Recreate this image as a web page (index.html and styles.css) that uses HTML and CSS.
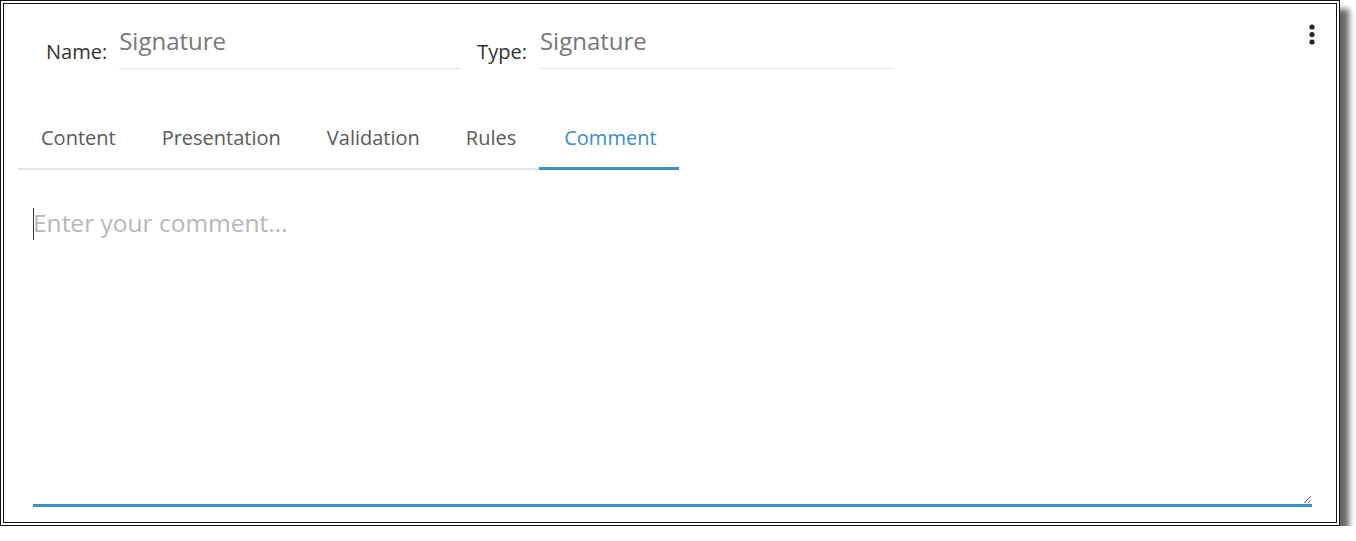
FILE: index.html
```html
<!DOCTYPE html>
<html lang="en">

<head>
    <meta charset="UTF-8">
    <meta name="viewport" content="width=device-width, initial-scale=1.0">
    <title>Signature - Comment</title>
    <link rel="stylesheet" href="styles.css">
</head>

<body>
    <div class="frame">
        <div class="header">
            <label class="label">Name:</label>
            <div class="field field-name">Signature</div>
            <label class="label label-type">Type:</label>
            <div class="field field-type">Signature</div>
            <div class="kebab">
                <svg width="8" height="24" viewBox="0 0 8 24">
                    <circle cx="4" cy="3" r="2.6" fill="#1f2838"/>
                    <circle cx="4" cy="10.5" r="2.6" fill="#1f2838"/>
                    <circle cx="4" cy="18" r="2.6" fill="#1f2838"/>
                </svg>
            </div>
        </div>

        <div class="tabs">
            <div class="tab">Content</div>
            <div class="tab">Presentation</div>
            <div class="tab">Validation</div>
            <div class="tab">Rules</div>
            <div class="tab active">Comment</div>
        </div>

        <div class="comment">
            <textarea class="comment-box" placeholder="Enter your comment..."></textarea>
            <span class="caret"></span>
        </div>
    </div>
</body>

</html>
```

FILE: styles.css
```css
html {
    box-sizing: border-box;
    font-family: 'Open Sans', sans-serif;
    background: #fff;
}

*,
*:before,
*:after {
    box-sizing: inherit;
}

body {
    margin: 0;
}

/* window frame with double border and drop shadow */
.frame {
    width: 1340px;
    height: 526px;
    border: 4px double #111;
    background: #fff;
    box-shadow: 9px 9px 6px rgba(0, 0, 0, 0.6);
    display: flex;
    flex-direction: column;
}

.header {
    display: flex;
    align-items: flex-end;
    padding: 21px 20px 0 42px;
}

.label {
    font-size: 20px;
    line-height: 27px;
    color: #333;
    padding-bottom: 4px;
    margin-right: 12px;
}

.label-type {
    margin-left: 17px;
    margin-right: 13px;
}

.field {
    font-size: 24px;
    line-height: 32px;
    color: #777;
    padding-bottom: 11px;
    border-bottom: 1px solid #e2e2e2;
}

.field-name {
    width: 341px;
}

.field-type {
    width: 353px;
    border-bottom: 1px dotted #cfcfcf;
}

.kebab {
    margin-left: auto;
    align-self: flex-start;
    margin-top: -1px;
    display: flex;
}

.tabs {
    display: flex;
    align-self: flex-start;
    margin: 41px 0 0 14px;
}

.tab {
    font-size: 20px;
    line-height: 28px;
    color: #5a5a5a;
    padding: 14px 23px 16px;
    border-bottom: 2px solid #e4e4e4;
}

.tab.active {
    color: #3d8dc6;
    padding: 14px 22px 15px 25px;
    border-bottom: 3px solid #3a91c9;
}

.comment {
    position: relative;
    margin: 31px 24px 0 29px;
}

.comment-box {
    display: block;
    width: 100%;
    height: 306px;
    padding: 6px 0 0 0;
    border: none;
    border-bottom: 3px solid #3a91c9;
    outline: none;
    resize: both;
    font-family: 'Open Sans', sans-serif;
    font-size: 24.5px;
    line-height: 32px;
    color: #333;
}

.comment-box::placeholder {
    color: #b8b8b8;
}

.caret {
    position: absolute;
    left: 0;
    top: 7px;
    width: 1px;
    height: 32px;
    background: #333;
}
```
